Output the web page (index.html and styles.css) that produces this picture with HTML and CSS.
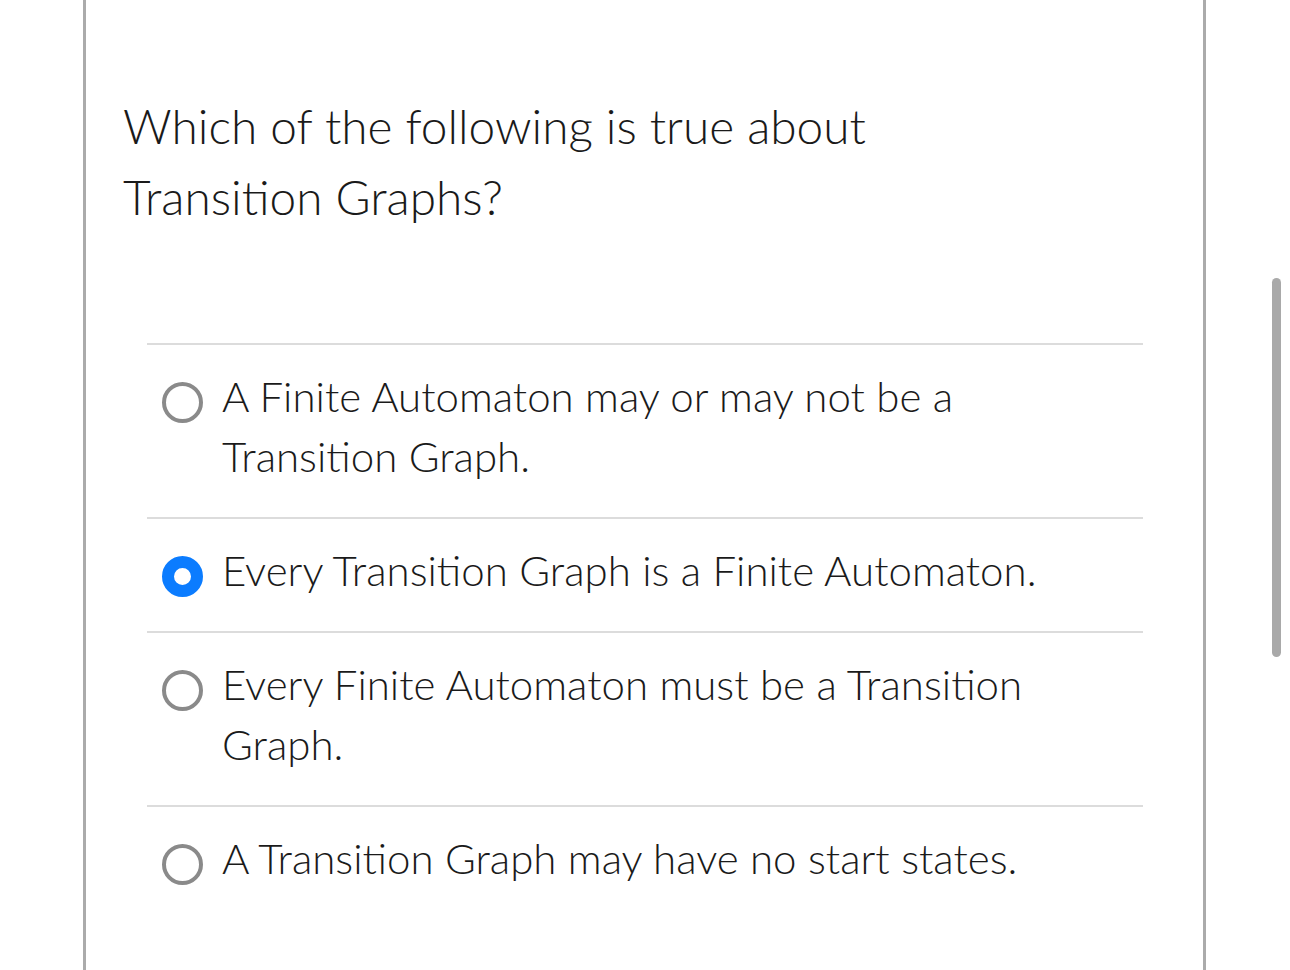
FILE: index.html
```html
<!DOCTYPE html>
<html>
<head>
<meta charset="utf-8">
<link rel="stylesheet" href="styles.css">
</head>
<body>
<div class="page">
  <div class="question">Which of the following is true about<br>Transition Graphs?</div>
  <ul class="options">
    <li class="option"><span class="radio"></span><span class="label">A Finite Automaton may or may not be a Transition Graph.</span></li>
    <li class="option"><span class="radio checked"></span><span class="label">Every Transition Graph is a Finite Automaton.</span></li>
    <li class="option"><span class="radio"></span><span class="label">Every Finite Automaton must be a Transition Graph.</span></li>
    <li class="option"><span class="radio"></span><span class="label">A Transition Graph may have no start states.</span></li>
  </ul>
</div>
<div class="scroll-thumb"></div>
</body>
</html>
```

FILE: styles.css
```css
html, body {
  margin: 0;
  padding: 0;
  background: #ffffff;
  height: 100%;
  overflow: hidden;
}
body {
  font-family: "Lato", "Open Sans", sans-serif;
  font-weight: 300;
  color: #1a1a1a;
}
.page {
  margin-left: 83px;
  width: 1123px;
  height: 970px;
  border-left: 3px solid #ababab;
  border-right: 3px solid #ababab;
  padding-top: 90px;
  box-sizing: border-box;
}
.question {
  font-size: 47.8px;
  line-height: 71px;
  padding-left: 37px;
}
.options {
  list-style: none;
  margin: 111px 0 0 61px;
  padding: 0;
  width: 996px;
}
.option {
  display: flex;
  align-items: flex-start;
  border-top: 2px solid #dcdcdc;
  padding: 21px 15px 31px 15px;
}
.radio {
  flex: none;
  width: 41px;
  height: 41px;
  box-sizing: border-box;
  border: 4px solid #8a8a8a;
  border-radius: 50%;
  margin-top: 16px;
  margin-right: 19px;
}
.radio.checked {
  border: 12px solid #0b7cff;
}
.label {
  font-size: 42px;
  line-height: 60px;
  max-width: 900px;
}
.scroll-thumb {
  position: absolute;
  left: 1272px;
  top: 278px;
  width: 9px;
  height: 379px;
  border-radius: 5px;
  background: #a9a9a9;
}
```
